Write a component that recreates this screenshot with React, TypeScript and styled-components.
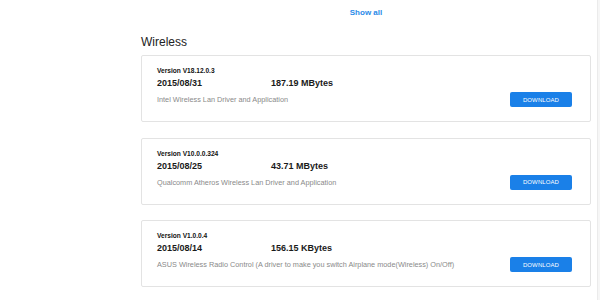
import * as React from 'react';
import styled, { createGlobalStyle } from 'styled-components';

const GlobalStyle = createGlobalStyle`
  html, body {
    margin: 0;
    padding: 0;
    background: #ffffff;
  }
  body {
    font-family: 'Liberation Sans', Arial, Helvetica, sans-serif;
    color: #111;
  }
`;

interface Driver {
  version: string;
  date: string;
  size: string;
  description: string;
}

const drivers: Driver[] = [
  {
    version: 'V18.12.0.3',
    date: '2015/08/31',
    size: '187.19 MBytes',
    description: 'Intel Wireless Lan Driver and Application',
  },
  {
    version: 'V10.0.0.324',
    date: '2015/08/25',
    size: '43.71 MBytes',
    description: 'Qualcomm Atheros Wireless Lan Driver and Application',
  },
  {
    version: 'V1.0.0.4',
    date: '2015/08/14',
    size: '156.15 KBytes',
    description: 'ASUS Wireless Radio Control (A driver to make you switch Airplane mode(Wireless) On/Off)',
  },
];

const Page = styled.div`
  display: flex;
  width: 600px;
  height: 300px;
  overflow: hidden;
`;

const Main = styled.main`
  flex: 1;
  padding: 8px 0 0 141px;
`;

const Gutter = styled.div`
  width: 2px;
  background: #f6f6f6;
  border-left: 1px solid #ebebeb;
`;

const Section = styled.section`
  width: 450px;
`;

const ShowAll = styled.a`
  display: block;
  text-align: center;
  font-size: 8px;
  line-height: 10px;
  font-weight: bold;
  color: #2a8ae8;
  cursor: pointer;
`;

const Heading = styled.h2`
  margin: 17px 0 6px;
  font-size: 12px;
  line-height: 14px;
  font-weight: normal;
  color: #222;
`;

const CardList = styled.div`
  display: flex;
  flex-direction: column;
  gap: 15.5px;
`;

const Card = styled.div`
  border: 1px solid #e3e3e3;
  border-radius: 2px;
  padding: 11px 18px 14px 15px;
`;

const Version = styled.div`
  font-size: 6.6px;
  line-height: 8px;
  font-weight: bold;
  color: #111;
`;

const MetaRow = styled.div`
  display: flex;
  margin-top: 3px;
  font-size: 9px;
  line-height: 10px;
  font-weight: bold;
  color: #1a1a1a;
`;

const DateCell = styled.span`
  width: 114px;
`;

const BottomRow = styled.div`
  display: flex;
  align-items: center;
  justify-content: space-between;
  margin-top: 4px;
`;

const Description = styled.span`
  font-size: 7.3px;
  line-height: 9px;
  color: #8a8a8a;
  white-space: nowrap;
`;

const DownloadButton = styled.button`
  flex: none;
  width: 62px;
  height: 15px;
  padding: 0;
  border: none;
  border-radius: 2px;
  background: #1a80e8;
  color: #ffffff;
  font-family: 'Liberation Sans', Arial, sans-serif;
  font-size: 6px;
  letter-spacing: 0.1px;
  cursor: pointer;
`;

const App = (): JSX.Element => {
  return (
    <>
      <GlobalStyle />
      <Page>
        <Main>
          <Section>
            <ShowAll>Show all</ShowAll>
            <Heading>Wireless</Heading>
            <CardList>
              {drivers.map((d) => (
                <Card key={d.version}>
                  <Version>Version {d.version}</Version>
                  <MetaRow>
                    <DateCell>{d.date}</DateCell>
                    <span>{d.size}</span>
                  </MetaRow>
                  <BottomRow>
                    <Description>{d.description}</Description>
                    <DownloadButton>DOWNLOAD</DownloadButton>
                  </BottomRow>
                </Card>
              ))}
            </CardList>
          </Section>
        </Main>
        <Gutter />
      </Page>
    </>
  );
};

export default App;
